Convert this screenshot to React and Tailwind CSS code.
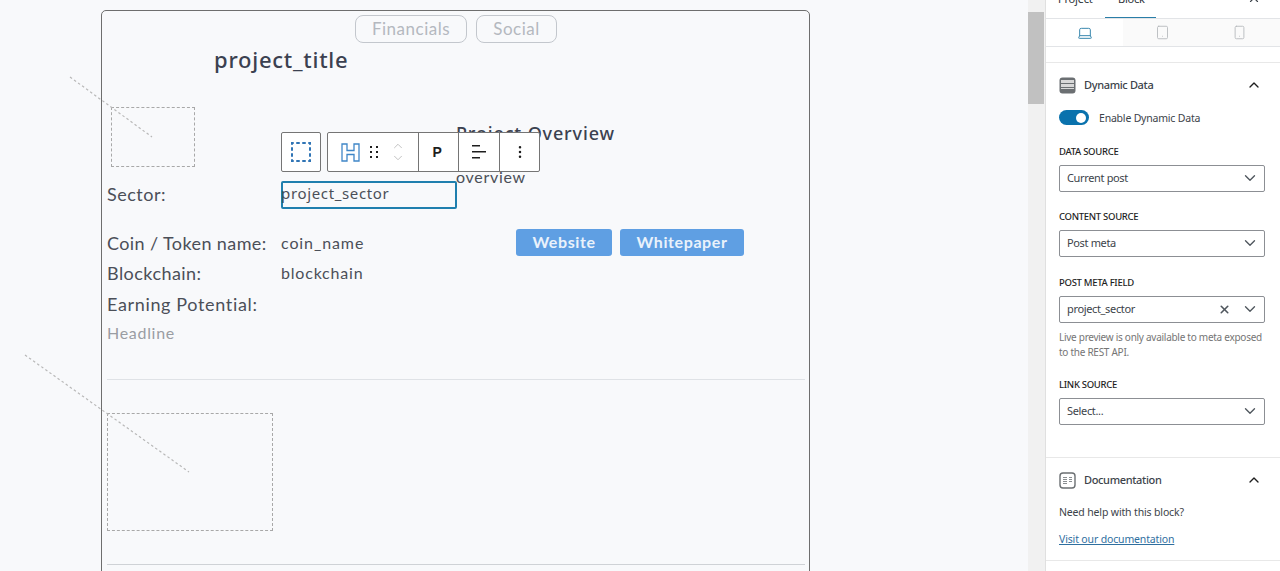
import { ChevronDown, ChevronUp, X, Laptop, Tablet, Smartphone, EllipsisVertical } from "lucide-react";

const sideFont = "font-['Noto_Sans',sans-serif]";

function SelectBox({ value, clearable }) {
  return (
    <div className="flex h-[27px] w-[206px] items-center rounded-[2px] border border-[#8c8f94] bg-white pl-[7px] pr-[5px] text-[11px] text-[#3c434a]">
      <span className="flex-1 tracking-[-0.35px]">{value}</span>
      {clearable && <X size={13} strokeWidth={3} className="mr-[10px] text-[#50575e]" />}
      <ChevronDown size={18} strokeWidth={1.8} className="text-[#50575e]" />
    </div>
  );
}

function Field({ label, children, className }) {
  return (
    <div className={className}>
      <p className="mb-[6px] text-[9.5px] leading-[14px] font-medium tracking-[-0.3px] text-[#1e1e1e]">{label}</p>
      {children}
    </div>
  );
}

function Placeholder({ className }) {
  return <div className={`border border-dashed border-[#a8a8a8] ${className}`} />;
}

function ToolbarCell({ children, className }) {
  return <div className={`flex h-full items-center justify-center ${className}`}>{children}</div>;
}

function BlockToolbar() {
  return (
    <div className="absolute left-[-2px] top-[-51px] z-10 flex h-[40px] gap-[6px] text-[#1e1e1e]">
      <div className="flex w-[40px] items-center justify-center rounded-[2px] border border-[#757575] bg-white">
        <svg width="20" height="20" viewBox="0 0 20 20" fill="none" stroke="#2f74b5" strokeWidth="2">
          <rect x="1" y="1" width="18" height="18" strokeDasharray="3.5 2.5" strokeDashoffset="1.75" />
        </svg>
      </div>
      <div className="flex rounded-[2px] border border-[#757575] bg-white">
        <ToolbarCell className="w-[91px] gap-[10px] border-r border-[#757575]">
          <svg width="19" height="19" viewBox="0 0 19 19" fill="none" stroke="#3f86c7" strokeWidth="1.3">
            <path d="M1 1h5v6.5h7V1h5v17h-5v-6.5H6V18H1z" />
          </svg>
          <svg width="8" height="12" viewBox="0 0 8 12" fill="#1e1e1e">
            <rect x="0" y="0" width="2" height="2" />
            <rect x="6" y="0" width="2" height="2" />
            <rect x="0" y="5" width="2" height="2" />
            <rect x="6" y="5" width="2" height="2" />
            <rect x="0" y="10" width="2" height="2" />
            <rect x="6" y="10" width="2" height="2" />
          </svg>
          <div className="ml-[3px] flex flex-col text-[#b5b5b5]">
            <ChevronUp size={14} strokeWidth={1.4} className="-mb-[2px]" />
            <ChevronDown size={14} strokeWidth={1.4} />
          </div>
        </ToolbarCell>
        <ToolbarCell className="w-[40px] border-r border-[#757575] font-['Liberation_Sans',sans-serif] text-[14px] font-bold">P</ToolbarCell>
        <ToolbarCell className="w-[41px] border-r border-[#757575]">
          <svg width="16" height="16" viewBox="0 0 16 16" fill="#1e1e1e">
            <rect x="1" y="1" width="8" height="1.5" />
            <rect x="1" y="7" width="14" height="1.5" />
            <rect x="1" y="13" width="8" height="1.5" />
          </svg>
        </ToolbarCell>
        <ToolbarCell className="w-[39px]">
          <EllipsisVertical size={16} strokeWidth={1.8} />
        </ToolbarCell>
      </div>
    </div>
  );
}

function Canvas() {
  return (
    <main className="relative w-[1028px] shrink-0 pl-[101px] pt-[10px] font-['Lato',sans-serif] text-[#4b4f58]">
      <svg className="pointer-events-none absolute left-0 top-0 z-0" width="300" height="571" fill="none" stroke="#b8b8b8" strokeWidth="1.2" strokeDasharray="2.5 2.5">
        <path d="M70 77 152 137" />
        <path d="M25 355 189 472" />
      </svg>

      <div className="h-[600px] w-[709px] rounded-t-[5px] border border-[#6e6e6e] pl-[5px] pr-[4px] pt-[4px]">
        <div className="ml-[248px] flex gap-[9px] text-[17px] tracking-[0.5px] text-[#b4b8bf]">
          <div className="flex h-[28px] w-[112px] items-center justify-center rounded-[8px] border border-[#c3c7cd]">Financials</div>
          <div className="flex h-[28px] w-[81px] items-center justify-center rounded-[8px] border border-[#c3c7cd]">Social</div>
        </div>
        <h2 className="ml-[107px] font-['Noto_Sans',sans-serif] text-[22px] leading-[33px] font-medium tracking-[0.75px] text-[#3b4150]">project_title</h2>

        <div className="mt-[31px] flex">
          <div className="w-[174px]">
            <Placeholder className="ml-[4px] h-[60px] w-[84px]" />
            <p className="mt-[14px] text-[18px] leading-[26px] tracking-[0.5px]">Sector:</p>
          </div>
          <div className="relative mt-[74px] h-[28px] w-[176px] rounded-[2px] border-2 border-[#1f7fae] indent-[-2px] font-['Noto_Sans',sans-serif] text-[15px] leading-[20px] tracking-[0.65px]">
            <BlockToolbar />
            project_sector
          </div>
          <div className="-ml-px">
            <h3 className="mt-[14px] font-['Noto_Sans',sans-serif] text-[18px] leading-[24px] font-medium tracking-[0.85px] text-[#3b4150]">Project Overview</h3>
            <p className="mt-[22px] text-[16px] leading-[20px] tracking-[0.7px]">overview</p>
          </div>
        </div>

        <div className="mt-[19px] flex h-[28px] items-center">
          <p className="mt-[3px] w-[174px] text-[18px] tracking-[0.4px]">Coin / Token name:</p>
          <p className="mt-[2px] w-[235px] text-[16px] tracking-[0.9px]">coin_name</p>
          <div className="flex gap-[8px] text-[16px] font-bold tracking-[0.6px] text-[#eaf2fb]">
            <div className="flex h-[27px] w-[96px] items-center justify-center rounded-[3px] bg-[#5f9fe3]">Website</div>
            <div className="flex h-[27px] w-[124px] items-center justify-center rounded-[3px] bg-[#5f9fe3]">Whitepaper</div>
          </div>
        </div>
        <div className="mt-[3px] flex h-[28px] items-center">
          <p className="w-[174px] text-[18px] tracking-[0.45px]">Blockchain:</p>
          <p className="text-[16px] tracking-[0.8px]">blockchain</p>
        </div>
        <p className="mt-[3px] h-[28px] text-[18px] leading-[28px] tracking-[0.65px]">Earning Potential:</p>
        <p className="mt-[1px] text-[16px] leading-[28px] tracking-[0.7px] text-[#9a9da3]">Headline</p>

        <div className="mt-[32px] border-t border-[#dfe2e6]" />
        <Placeholder className="mt-[33px] h-[118px] w-[166px]" />
        <div className="mt-[33px] border-t border-[#cfd2d6]" />
      </div>
    </main>
  );
}

function Sidebar() {
  return (
    <aside className={`flex w-[235px] shrink-0 flex-col border-l border-[#e0e0e0] bg-white text-[#3c434a] ${sideFont}`}>
      <div className="flex h-[19px] items-start overflow-hidden border-b border-[#e2e4e7] text-[11px] tracking-[-0.2px] text-[#2c3338]">
        <span className="ml-[12px] -mt-[8px] w-[47px] leading-[14px]">Project</span>
        <div className="h-full w-[51px] border-b border-[#2a7ea8] pl-[13px]">
          <span className="-mt-[8px] block leading-[14px]">Block</span>
        </div>
        <X size={14} className="ml-[91px] -mt-[9px] text-[#3c434a]" />
      </div>
      <div className="flex h-[28px] border-b border-[#e2e4e7]">
        <div className="flex w-[77px] items-center justify-center text-[#2a7ea8]">
          <Laptop size={16} strokeWidth={1.4} />
        </div>
        <div className="flex w-[78px] items-center justify-center bg-[#fafafa] text-[#b5b8bb]">
          <Tablet size={15} strokeWidth={1.4} />
        </div>
        <div className="flex flex-1 items-center justify-center bg-[#fafafa] pr-[3px] text-[#b5b8bb]">
          <Smartphone size={15} strokeWidth={1.4} />
        </div>
      </div>

      <div className="mt-[15px] h-[395px] border-t border-[#e8e8e8] px-[13px] pt-[14px]">
        <div className="flex h-[16px] items-center">
          <svg width="17" height="17" viewBox="0 0 17 17" fill="none">
            <rect x="0.5" y="0.5" width="16" height="16" rx="3" fill="#6b6f72" />
            <rect x="2" y="3" width="13" height="3" fill="#d8d8d8" />
            <rect x="2" y="7" width="13" height="3" fill="#d8d8d8" />
            <rect x="2" y="11" width="13" height="1" fill="#d8d8d8" />
          </svg>
          <span className="ml-[8px] flex-1 text-[11px] font-medium tracking-[-0.35px]">Dynamic Data</span>
          <ChevronUp size={16} strokeWidth={2} className="mr-[5px] text-[#1e1e1e]" />
        </div>

        <div className="mt-[17px] flex items-center">
          <div className="flex h-[15px] w-[30px] items-center justify-end rounded-full bg-[#0a72ad] pr-[3px]">
            <div className="size-[10px] rounded-full bg-white" />
          </div>
          <span className="ml-[10px] translate-y-px text-[10.5px] tracking-[-0.2px]">Enable Dynamic Data</span>
        </div>

        <Field label="DATA SOURCE" className="mt-[19px]">
          <SelectBox value="Current post" />
        </Field>
        <Field label="CONTENT SOURCE" className="mt-[18px]">
          <SelectBox value="Post meta" />
        </Field>
        <Field label="POST META FIELD" className="mt-[19px]">
          <SelectBox value="project_sector" clearable />
        </Field>
        <p className="mt-[7px] text-[10px] leading-[15px] tracking-[-0.27px] text-[#757575]">
          Live preview is only available to meta exposed to the REST API.
        </p>
        <Field label="LINK SOURCE" className="mt-[18px]">
          <SelectBox value="Select..." />
        </Field>
      </div>

      <div className="h-[103px] border-t border-[#e8e8e8] px-[13px] pt-[14px]">
        <div className="flex h-[16px] items-center">
          <svg width="17" height="17" viewBox="0 0 17 17" fill="none">
            <rect x="1" y="1" width="15" height="15" rx="3" stroke="#6b6f72" strokeWidth="1.4" />
            <path d="M4 5h4v1H4zM4 7h4v1H4zM4 9h4v1H4zM4 11h4v1H4zM10 5h3v1h-3zM10 7h3v1h-3zM10 9h3v1h-3z" fill="#8a8e91" />
          </svg>
          <span className="ml-[8px] flex-1 text-[11px] font-medium tracking-[-0.35px]">Documentation</span>
          <ChevronUp size={16} strokeWidth={2} className="mr-[5px] text-[#1e1e1e]" />
        </div>
        <p className="mt-[16px] text-[10.5px] leading-[16px] tracking-[-0.15px]">Need help with this block?</p>
        <a className="mt-[11px] block text-[10.5px] leading-[16px] tracking-[-0.15px] text-[#2f6f9f] underline">Visit our documentation</a>
      </div>
      <div className="border-t border-[#e8e8e8]" />
    </aside>
  );
}

export default function App() {
  return (
    <div className="flex h-[571px] w-[1280px] overflow-hidden bg-[#f8f9fb]">
      <Canvas />
      <div className="w-[17px] shrink-0 bg-[#f1f1f1] pt-[12px]">
        <div className="h-[92px] w-[16px] bg-[#c1c1c1]" />
      </div>
      <Sidebar />
    </div>
  );
}
